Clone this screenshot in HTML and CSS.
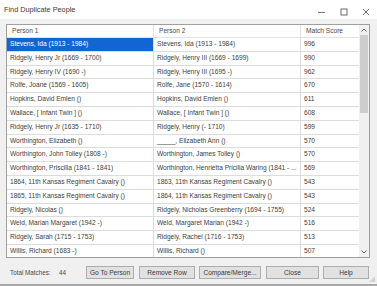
FILE: index.html
```
<!DOCTYPE html>
<html>
<head>
<meta charset="utf-8">
<title>Find Duplicate People</title>
<link rel="stylesheet" href="styles.css">
</head>
<body>
<div class="win">
	<div class="titlebar">
		<span class="title">Find Duplicate People</span>
		<div class="ctrls">
			<span class="ctrl"><svg width="8" height="8" viewBox="0 0 8 8"><path d="M0 4.5h7" stroke="#555" stroke-width="0.8"/></svg></span>
			<span class="ctrl"><svg width="8" height="8" viewBox="0 0 8 8"><rect x="1" y="1" width="6" height="6" fill="none" stroke="#444" stroke-width="0.8"/></svg></span>
			<span class="ctrl"><svg width="8" height="8" viewBox="0 0 8 8"><path d="M1 1l6 6M7 1l-6 6" stroke="#444" stroke-width="0.8"/></svg></span>
		</div>
	</div>

	<div class="main">
		<div class="grid">
			<div class="tbl">
				<div class="row head"><div>Person 1</div><div>Person 2</div><div>Match Score</div></div>
				<div class="row"><div class="sel">Stevens, Ida (1913 - 1984)</div><div>Stevens, Ida (1913 - 1984)</div><div>996</div></div>
				<div class="row"><div>Ridgely, Henry Jr (1669 - 1700)</div><div>Ridgely, Henry III (1669 - 1699)</div><div>990</div></div>
				<div class="row"><div>Ridgely, Henry IV (1690 -)</div><div>Ridgely, Henry III (1695 -)</div><div>962</div></div>
				<div class="row"><div>Rolfe, Joane (1569 - 1605)</div><div>Rolfe, Jane (1570 - 1614)</div><div>670</div></div>
				<div class="row"><div>Hopkins, David Emlen ()</div><div>Hopkins, David Emlen ()</div><div>611</div></div>
				<div class="row"><div>Wallace, [ Infant Twin ] ()</div><div>Wallace, [ Infant Twin ] ()</div><div>608</div></div>
				<div class="row"><div>Ridgely, Henry Jr (1635 - 1710)</div><div>Ridgely, Henry (- 1710)</div><div>599</div></div>
				<div class="row"><div>Worthington, Elizabeth ()</div><div>_____, Elizabeth Ann ()</div><div>570</div></div>
				<div class="row"><div>Worthington, John Tolley (1808 -)</div><div>Worthington, James Tolley ()</div><div>570</div></div>
				<div class="row"><div>Worthington, Priscilla (1841 - 1841)</div><div>Worthington, Henrietta Pricilla Waring (1841 - ...</div><div>569</div></div>
				<div class="row"><div>1864, 11th Kansas Regiment Cavalry ()</div><div>1863, 11th Kansas Regiment Cavalry ()</div><div>543</div></div>
				<div class="row"><div>1865, 11th Kansas Regiment Cavalry ()</div><div>1864, 11th Kansas Regiment Cavalry ()</div><div>543</div></div>
				<div class="row"><div>Ridgely, Nicolas ()</div><div>Ridgely, Nicholas Greenberry (1694 - 1755)</div><div>524</div></div>
				<div class="row"><div>Weld, Marian Margaret (1942 -)</div><div>Weld, Margaret Marian (1942 -)</div><div>516</div></div>
				<div class="row"><div>Ridgely, Sarah (1715 - 1753)</div><div>Ridgely, Rachel (1716 - 1753)</div><div>513</div></div>
				<div class="row"><div>Willis, Richard (1683 -)</div><div>Willis, Richard ()</div><div>507</div></div>
				<div class="row"><div></div><div></div><div></div></div>
			</div>
			<div class="vscroll">
				<span class="arr"><svg width="6" height="4" viewBox="0 0 6 4"><path d="M0.5 3.5L3 1l2.5 2.5" fill="none" stroke="#606060" stroke-width="1"/></svg></span>
				<div class="track"><div class="thumb"></div></div>
				<span class="arr"><svg width="6" height="4" viewBox="0 0 6 4"><path d="M0.5 0.5L3 3l2.5-2.5" fill="none" stroke="#606060" stroke-width="1"/></svg></span>
			</div>
		</div>

		<div class="foot">
			<span class="lbl">Total Matches:</span>
			<span class="num">44</span>
			<span class="btn b1">Go To Person</span>
			<span class="btn b2">Remove Row</span>
			<span class="btn b3">Compare/Merge...</span>
			<span class="btn b4">Close</span>
			<span class="btn b5">Help</span>
		</div>
	</div>
	<div class="grip"></div>
</div>
</body>
</html>
```

FILE: styles.css
```
*{margin:0;padding:0;box-sizing:border-box;}
body{background:#f0f0f0;font-family:"Liberation Sans",Arial,sans-serif;}

.win{position:relative;width:377px;height:286px;background:#f0f0f0;border-bottom:2px solid #a8a8a8;overflow:hidden;}

/** 标题栏 **/
.titlebar{display:flex;justify-content:space-between;height:19px;background:#fff;}
.titlebar .title{padding:5px 0 0 4px;font-size:7.3px;color:#3a3a3a;}
.ctrls{display:flex;padding-top:8px;}
.ctrl{display:flex;justify-content:center;width:22px;}

/** 表格 **/
.main{padding:5px 7px 0 6px;}
.grid{display:flex;height:234px;border:1px solid #a0a0a0;background:#fff;}
.tbl{flex:1;overflow:hidden;}
.row{display:grid;grid-template-columns:147px 147px 1fr;height:13.8px;}
.row div{padding-left:3px;font-size:6.6px;line-height:12.8px;color:#404040;white-space:nowrap;overflow:hidden;border-right:1px solid #dcdcdc;border-bottom:1px solid #dcdcdc;}
.row div:last-child{border-right:none;}
.row .sel{background:#1266d4;color:#fff;}
.head{height:13px;}
.head div{padding-left:5px;line-height:12px;color:#4a4a4a;border-color:#e2e2e2;}

.vscroll{display:flex;flex-direction:column;width:10px;background:#f0f0f0;}
.vscroll .arr{display:flex;justify-content:center;align-items:center;height:10px;}
.track{flex:1;padding:0 1px;}
.thumb{height:78px;background:#cdcdcd;}

/** 底部按钮 **/
.foot{display:flex;align-items:center;height:27px;padding-top:1px;font-size:6.3px;color:#4a4a4a;}
.lbl{margin-left:4px;width:49px;}
.num{width:27px;}
.btn{height:13px;margin-right:5px;background:#e1e1e1;border:1px solid #adadad;text-align:center;line-height:11px;font-size:6.6px;color:#3a3a3a;}
.b1{width:48px;}
.b2{width:56px;margin-right:4px;}
.b3{width:62px;}
.b4{width:53px;margin-right:4px;}
.b5{width:46px;margin-right:0;}

.grip{position:absolute;right:2px;bottom:2px;width:6px;height:6px;background:radial-gradient(circle,#b0b0b0 0.6px,transparent 0.8px) 0 0/2px 2px;clip-path:polygon(100% 0,100% 100%,0 100%);}
```
